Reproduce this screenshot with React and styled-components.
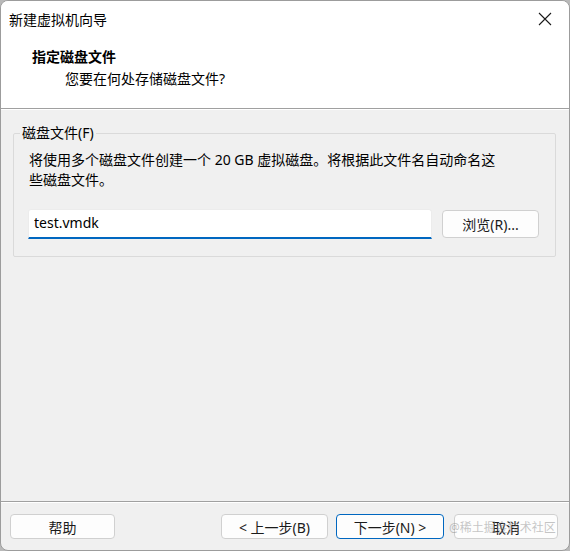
import React from 'react';
import styled, { createGlobalStyle } from 'styled-components';

const font = `"Segoe UI", "Noto Sans", "Noto Sans CJK SC", sans-serif`;

const GlobalStyle = createGlobalStyle`
	html, body {
		margin: 0;
		padding: 0;
		background: #b9b9b9;
	}
	body {
		font-family: ${font};
		color: #000;
	}
	* {
		box-sizing: border-box;
	}
`;

const App = () => {
	return (
		<>
			<GlobalStyle />
			<Window>
				<TitleBar>
					<span>新建虚拟机向导</span>
					<CloseBtn>
						<svg width="14" height="14" viewBox="0 0 14 14">
							<path d="M1 1L13 13M13 1L1 13" stroke="#1a1a1a" strokeWidth="1.1" />
						</svg>
					</CloseBtn>
				</TitleBar>
				<Header>
					<h1>指定磁盘文件</h1>
					<p>您要在何处存储磁盘文件?</p>
				</Header>
				<Body>
					<Group>
						<legend>磁盘文件(F)</legend>
						<Desc>
							将使用多个磁盘文件创建一个 20 GB 虚拟磁盘。将根据此文件名自动命名这些磁盘文件。
						</Desc>
						<FileRow>
							<FileInput defaultValue="test.vmdk" />
							<Button $w={97}>浏览(R)...</Button>
						</FileRow>
					</Group>
				</Body>
				<Footer>
					<Button $w={105}>帮助</Button>
					<Spacer />
					<Button $w={107}>&lt; 上一步(B)</Button>
					<Button $w={108} $primary>
						下一步(N) &gt;
					</Button>
					<CancelWrap>
						<Button $w={104}>取消</Button>
						<Watermark>@稀土掘金技术社区</Watermark>
					</CancelWrap>
				</Footer>
			</Window>
		</>
	);
};

const Window = styled.div`
	width: 570px;
	height: 551px;
	border: 1px solid #9c9c9c;
	border-radius: 8px;
	overflow: hidden;
	background: #f0f0f0;
	display: flex;
	flex-direction: column;
`;

const TitleBar = styled.div`
	height: 35px;
	background: #fff;
	display: flex;
	align-items: center;
	justify-content: space-between;
	padding-left: 8px;
	font-size: 14px;
`;

const CloseBtn = styled.div`
	width: 46px;
	height: 35px;
	display: flex;
	align-items: center;
	justify-content: center;
	margin-right: 1px;
`;

const Header = styled.div`
	height: 73px;
	background: #fff;
	padding: 11px 0 0 31px;
	border-bottom: 1px solid #a0a0a0;
	h1 {
		margin: 0;
		font-size: 14px;
		font-weight: bold;
		line-height: 20px;
	}
	p {
		margin: 2px 0 0 33px;
		font-size: 14px;
		line-height: 20px;
	}
`;

const Body = styled.div`
	flex: 1;
	padding: 14px 13px 0 12px;
	border-top: 1px solid #fff;
	border-bottom: 1px solid #a0a0a0;
`;

const Group = styled.fieldset`
	margin: 0;
	padding: 8px 15px 17px 14px;
	border: 1px solid #dadada;
	border-radius: 2px;
	min-width: 0;
	legend {
		font-size: 14px;
		padding: 0 2px;
		margin-left: -8px;
		line-height: 18px;
	}
`;

const Desc = styled.p`
	margin: 0;
	width: 468px;
	font-size: 14px;
	line-height: 20px;
	padding-left: 1px;
`;

const FileRow = styled.div`
	display: flex;
	align-items: center;
	gap: 10px;
	margin-top: 19px;
`;

const FileInput = styled.input`
	width: 404px;
	height: 30px;
	border: 1px solid #ececec;
	border-bottom: 2px solid #0067c0;
	border-radius: 3px 3px 0 0;
	background: #fff;
	font-family: ${font};
	font-size: 14px;
	padding: 0 5px 3px;
	outline: none;
	color: #000;
`;

const Button = styled.button`
	width: ${(p) => p.$w}px;
	height: 28px;
	background: #fdfdfd;
	border: 1px solid ${(p) => (p.$primary ? '#0067c0' : '#d0d0d0')};
	border-radius: 4px;
	font-family: ${font};
	font-size: 14px;
	color: #1b1b1b;
	padding: 0;
	display: flex;
	align-items: center;
	justify-content: center;
`;

const Footer = styled.div`
	height: 48px;
	border-top: 1px solid #fff;
	display: flex;
	align-items: center;
	padding: 0 11px 0 9px;
	gap: 8px;
	${Button} {
		height: 25px;
	}
`;

const Spacer = styled.div`
	flex: 1;
`;

const CancelWrap = styled.div`
	position: relative;
	margin-left: 2px;
	display: flex;
`;

const Watermark = styled.span`
	position: absolute;
	left: -5px;
	top: 4px;
	font-size: 12px;
	color: rgba(140, 140, 140, 0.5);
	white-space: nowrap;
	pointer-events: none;
`;

export default App;
